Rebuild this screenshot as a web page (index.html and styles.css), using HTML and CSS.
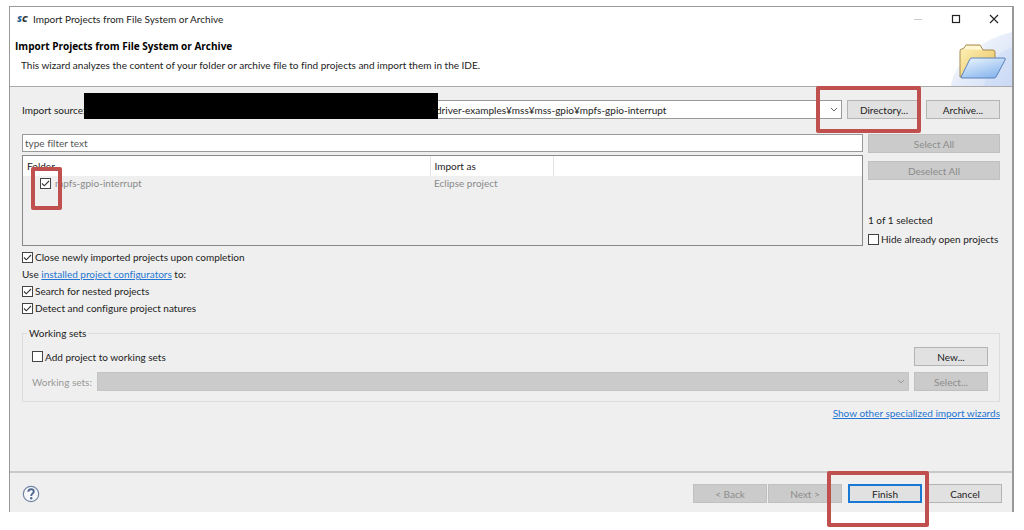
FILE: index.html
```html
<!DOCTYPE html>
<html lang="en">
<head>
<meta charset="utf-8">
<meta name="viewport" content="width=device-width, initial-scale=1">
<title>Import Projects from File System or Archive</title>
<link rel="stylesheet" href="styles.css">
</head>
<body>
<main class="window">
  <header class="head">
    <div class="titlebar">
      <span class="logo"><span class="logo-s">S</span>C</span>
      <span class="title">Import Projects from File System or Archive</span>
      <div class="controls">
        <button class="control" aria-label="Minimize" disabled><svg width="10" height="10" viewBox="0 0 10 10"><path d="M1 5.5h8" stroke="#ccc"/></svg></button>
        <button class="control" aria-label="Maximize"><svg width="10" height="10" viewBox="0 0 10 10"><rect x="1.5" y="1.5" width="7" height="7" fill="none" stroke="#222" stroke-width="1.2"/></svg></button>
        <button class="control" aria-label="Close"><svg width="10" height="10" viewBox="0 0 10 10"><path d="M1 1l8 8M9 1l-8 8" stroke="#222" stroke-width="1.1"/></svg></button>
      </div>
    </div>
    <h1 class="heading">Import Projects from File System or Archive</h1>
    <p class="intro">This wizard analyzes the content of your folder or archive file to find projects and import them in the IDE.</p>
    <svg class="banner" width="62" height="54" viewBox="0 0 62 54" aria-hidden="true">
      <defs>
        <linearGradient id="sky" x1="0" y1="0" x2="1" y2="1"><stop offset="0" stop-color="#fff"/><stop offset="1" stop-color="#cfdcf5"/></linearGradient>
        <linearGradient id="gold" x1="0" y1="0" x2="1" y2="1"><stop offset="0" stop-color="#fff3bb"/><stop offset="1" stop-color="#e8c05c"/></linearGradient>
        <linearGradient id="blue" x1="0" y1="0" x2="0.6" y2="1"><stop offset="0" stop-color="#eef7ff"/><stop offset="1" stop-color="#8db9ee"/></linearGradient>
      </defs>
      <path d="M62 0C42 5 24 14 12 30 5 39 2 46 1 54h61z" fill="url(#sky)"/>
      <path d="M62 16C48 20 38 30 34 54h28z" fill="#c6d6f4" opacity=".45"/>
      <path d="M10 45V19q0-2 2-2l2-1 2-3h14l3 5h10q2 0 2 2v25z" fill="url(#gold)" stroke="#a5894e"/>
      <path d="M14 17l2-3h14l2 4z" fill="#fff8d2"/>
      <path d="M12 46q-1 0-1-1l9-18q1-1 2-1h32q2 0 1 2l-9 17q-1 1-2 1z" fill="url(#blue)" stroke="#5a82bd"/>
    </svg>
  </header>

  <form class="body">
    <div class="source">
      <label for="source">Import source:</label>
      <select id="source" class="combo source-combo"><option>driver-examples¥mss¥mss-gpio¥mpfs-gpio-interrupt</option></select>
      <span class="redaction"></span>
      <span class="marked"><button type="button" class="btn">Directory...</button><span class="mark mark-directory"></span></span>
      <button type="button" class="btn archive">Archive...</button>
    </div>

    <div class="projects">
      <div class="listing">
        <input class="filter" type="text" placeholder="type filter text" aria-label="Filter">
        <div class="tree">
          <table class="table">
            <colgroup><col class="col-folder"><col class="col-import"><col></colgroup>
            <thead><tr><th>Folder</th><th>Import as</th><th></th></tr></thead>
            <tbody><tr>
              <td><span class="item"><span class="marked"><input class="tick" type="checkbox" id="project" checked><span class="mark mark-tick"></span></span><label for="project">mpfs-gpio-interrupt</label></span></td>
              <td>Eclipse project</td><td></td>
            </tr></tbody>
          </table>
        </div>
      </div>
      <div class="side">
        <button type="button" class="btn" disabled>Select All</button>
        <button type="button" class="btn" disabled>Deselect All</button>
        <p class="count">1 of 1 selected</p>
        <label class="option"><input class="tick" type="checkbox">Hide already open projects</label>
      </div>
    </div>

    <div class="options">
      <label class="option"><input class="tick" type="checkbox" checked>Close newly imported projects upon completion</label>
      <p class="option-text">Use <a href="#">installed project configurators</a> to:</p>
      <label class="option"><input class="tick" type="checkbox" checked>Search for nested projects</label>
      <label class="option"><input class="tick" type="checkbox" checked>Detect and configure project natures</label>
    </div>

    <fieldset class="sets">
      <legend>Working sets</legend>
      <div class="sets-row">
        <label class="option"><input class="tick" type="checkbox">Add project to working sets</label>
        <button type="button" class="btn">New...</button>
      </div>
      <div class="sets-row">
        <label class="dim" for="sets">Working sets:</label>
        <select id="sets" class="combo sets-combo" disabled></select>
        <button type="button" class="btn" disabled>Select...</button>
      </div>
    </fieldset>
    <p class="more"><a href="#">Show other specialized import wizards</a></p>
  </form>

  <footer class="foot">
    <button class="help" aria-label="Help"><svg width="18" height="18" viewBox="0 0 18 18"><circle cx="9" cy="9" r="7.7" fill="#f6f8fb" stroke="#7485a5" stroke-width="1.2"/><path d="M6.3 6.8C6.3 3.3 11.8 3.5 11.8 6.6 11.8 8.6 9.2 8.6 9.2 11" fill="none" stroke="#526891" stroke-width="1.9"/><circle cx="9.2" cy="13.2" r="1.2" fill="#526891"/></svg></button>
    <div class="actions">
      <button class="btn" disabled>&lt; Back</button>
      <button class="btn" disabled>Next &gt;</button>
      <span class="marked finish"><button class="btn primary">Finish</button><span class="mark mark-finish"></span></span>
      <button class="btn cancel">Cancel</button>
    </div>
  </footer>
</main>
</body>
</html>
```
FILE: styles.css
```css
* { box-sizing: border-box; }

body {
  margin: 0;
  padding: 6px 10px 18px 9px;
  background: #fff;
  color: #222;
  font: 10px/14px Lato, "Open Sans", sans-serif;
  font-variant-ligatures: none;
}

h1, p { margin: 0; }
button, input, select { font: inherit; color: inherit; margin: 0; }
a { color: #2476d2; text-decoration: underline; }

.window {
  background: #efefef;
  border: 1px solid #999;
  border-width: 1px 2px 0 1px;
}

.head {
  position: relative;
  height: 80px;
  background: #fff;
  border-bottom: 1px solid #aaa;
}
.titlebar { display: flex; align-items: center; height: 24px; padding: 0 8px 0 7px; }
.logo { width: 16px; color: #333; font: italic 800 9px/14px "Open Sans", sans-serif; }
.logo-s { color: #1d6299; }
.controls { display: flex; gap: 18px; margin-left: auto; }
.control { display: flex; justify-content: center; width: 20px; padding: 0; border: 0; background: none; }
.heading { padding: 8px 0 0 5px; color: #000; font: 700 10px/14px "Open Sans", sans-serif; }
.intro { padding: 5px 0 0 11px; }
.banner { position: absolute; right: 0; bottom: 0; }

.body { display: flex; flex-direction: column; padding: 13px 12px 0; }

.source { position: relative; display: flex; align-items: center; }
.source label { flex: none; width: 69px; }
.redaction { position: absolute; left: 62px; top: -7px; width: 354px; height: 26px; background: #000; }

.btn {
  width: 74px;
  height: 19px;
  padding: 0;
  border: 1px solid #b4b4b4;
  background: #e1e1e1;
  line-height: 16px;
}
.btn:disabled { border-color: #c0c0c0; background: #cbcbcb; color: #8c8c8c; }
.primary { border: 2px solid #1978d4; line-height: 14px; }
.archive { margin-left: 5px; }

.combo {
  appearance: none;
  flex: 1;
  min-width: 0;
  height: 19px;
  border: 1px solid #999;
  border-radius: 0;
  background: #fff url("data:image/svg+xml,%3Csvg xmlns='http://www.w3.org/2000/svg' width='8' height='6'%3E%3Cpath d='M1 1l3 3 3-3' fill='none' stroke='%23666'/%3E%3C/svg%3E") no-repeat right 3px center;
}
.source-combo { margin: 0 5px 0 2px; padding: 0 16px 0 342px; }
.sets-combo {
  border-color: #c4c4c4;
  background-color: #cbcbcb;
  background-image: url("data:image/svg+xml,%3Csvg xmlns='http://www.w3.org/2000/svg' width='8' height='6'%3E%3Cpath d='M1 1l3 3 3-3' fill='none' stroke='%23999'/%3E%3C/svg%3E");
  opacity: 1;
}

.marked { position: relative; display: flex; }
.mark { position: absolute; border: 4px solid #c0504d; border-radius: 2px; pointer-events: none; }
.mark-directory { left: -31px; right: 0; top: -14px; bottom: -14px; }
.mark-tick { left: -9px; right: -11px; top: -11px; bottom: -21px; }
.mark-finish { left: -21px; right: -7px; top: -13px; bottom: -24px; z-index: 1; }

.projects { display: flex; gap: 5px; margin-top: 15px; }
.listing { flex: 1; display: flex; flex-direction: column; gap: 3px; }
.filter { width: 100%; height: 18px; padding: 0 2px 1px; border: 1px solid #999; background: #fff; }
.filter::placeholder { color: #555; opacity: 1; }
.tree { height: 91px; border: 1px solid #888; }
.table { width: 100%; table-layout: fixed; border-collapse: collapse; }
.col-folder { width: 407px; }
.col-import { width: 123px; }
.table th { height: 20px; padding: 0 4px 1px; border-right: 1px solid #e2e2e2; background: #fff; font-weight: 400; text-align: left; }
.table th:last-child { border-right: 0; }
.table td { padding: 0 4px; color: #8a8a8a; }
.item { display: flex; align-items: center; gap: 4px; padding-left: 13px; }

.tick {
  appearance: none;
  flex: none;
  width: 11px;
  height: 11px;
  border: 1px solid #444;
  background: #fff;
}
.tick:checked { background: #fff url("data:image/svg+xml,%3Csvg xmlns='http://www.w3.org/2000/svg' width='9' height='9'%3E%3Cpath d='M1 4.5l2.3 2.3L8 2' fill='none' stroke='%23333' stroke-width='1.1'/%3E%3C/svg%3E") center no-repeat; }

.side { display: flex; flex-direction: column; width: 132px; }
.side .btn { width: 100%; margin-bottom: 8px; }
.count { margin-top: 25px; }
.side .option { margin-top: 4px; white-space: nowrap; }

.option { display: flex; align-items: center; gap: 2px; line-height: 16px; }
.options { display: flex; flex-direction: column; gap: 1px; margin-top: 2px; }
.option-text { line-height: 16px; }

.sets { margin: 10px 0 0; padding: 7px 11px 10px 9px; border: 1px solid #dcdcdc; min-width: 0; }
.sets legend { margin-left: -5px; padding: 0 2px; }
.sets-row { display: flex; align-items: center; gap: 5px; }
.sets-row + .sets-row { margin-top: 6px; }
.sets-row > .option { flex: 1; }
.dim { color: #999; }
.more { margin-top: 4px; text-align: right; }

.foot {
  display: flex;
  align-items: center;
  justify-content: space-between;
  height: 41px;
  margin-top: 51px;
  padding: 2px 10px 0 12px;
  border-top: 2px solid #c9c9c9;
}
.help { display: flex; padding: 0; border: 0; background: none; }
.actions { display: flex; }
.actions .btn + .btn { margin-left: 1px; }
.finish { margin-left: 6px; }
.cancel { margin-left: 6px; }
```
